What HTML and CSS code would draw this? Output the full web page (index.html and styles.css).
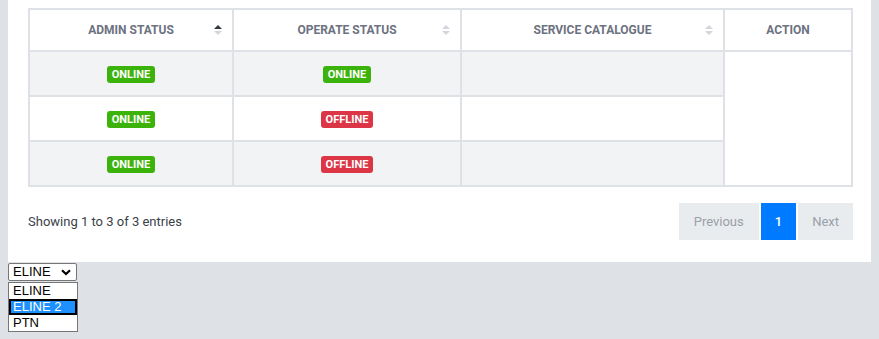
FILE: index.html
```html
<!DOCTYPE html>
<html lang="en">
<head>
  <meta charset="UTF-8">
  <meta name="viewport" content="width=device-width, initial-scale=1.0">
  <title>Services</title>
  <link rel="stylesheet" href="styles.css">
</head>
<body>
  <div class="card">
    <table class="grid">
      <colgroup>
        <col class="col-admin">
        <col class="col-operate">
        <col class="col-catalogue">
        <col class="col-action">
      </colgroup>
      <thead>
        <tr>
          <th class="sortable asc">Admin Status<span class="sort"></span></th>
          <th class="sortable">Operate Status<span class="sort"></span></th>
          <th class="sortable">Service Catalogue<span class="sort"></span></th>
          <th class="action">Action</th>
        </tr>
      </thead>
      <tbody>
        <tr class="odd">
          <td><span class="badge online">ONLINE</span></td>
          <td><span class="badge online">ONLINE</span></td>
          <td></td>
          <td class="action-cell" rowspan="3"></td>
        </tr>
        <tr>
          <td><span class="badge online">ONLINE</span></td>
          <td><span class="badge offline">OFFLINE</span></td>
          <td></td>
        </tr>
        <tr class="odd">
          <td><span class="badge online">ONLINE</span></td>
          <td><span class="badge offline">OFFLINE</span></td>
          <td></td>
        </tr>
      </tbody>
    </table>
    <div class="footer">
      <div class="info">Showing 1 to 3 of 3 entries</div>
      <div class="pager">
        <span class="page-btn disabled">Previous</span>
        <span class="page-btn current">1</span>
        <span class="page-btn disabled">Next</span>
      </div>
    </div>
  </div>
  <div class="pickers">
    <div class="picker">
      <span class="picker-value">ELINE</span>
      <svg class="picker-arrow" width="10" height="7" viewBox="0 0 10 7">
        <path d="M1 1.2 L5 5 L9 1.2" fill="none" stroke="#000" stroke-width="2.2"/>
      </svg>
    </div>
    <div class="picker-list" role="listbox">
      <div class="picker-item" role="option">ELINE</div>
      <div class="picker-item active" role="option">ELINE 2</div>
      <div class="picker-item" role="option">PTN</div>
    </div>
  </div>
</body>
</html>
```

FILE: styles.css
```css
body {
  margin: 0 8px;
  background-color: #dee1e5;
  font-family: Roboto, 'Liberation Sans', sans-serif;
  color: #3a3f4a;
}
.card {
  width: 825px;
  background-color: #fff;
  padding: 8px 19px 22px 20px;
}
.grid {
  width: calc(100% - 2px);
  table-layout: fixed;
  border-collapse: collapse;
  border: 2px solid #dee2e6;
}
.col-admin { width: 204px; }
.col-operate { width: 228px; }
.col-catalogue { width: 263px; }
.col-action { width: 128px; }
.grid th,
.grid td {
  border: 2px solid #dee2e6;
  text-align: center;
  vertical-align: middle;
}
.grid th {
  position: relative;
  padding: 12px 10px;
  line-height: 16px;
  font-size: 12px;
  font-weight: 700;
  text-transform: uppercase;
  color: #6c7280;
}
.grid td {
  padding: 12px 10px;
  height: 19px;
  line-height: 17px;
}
.grid tr.odd td {
  background-color: #f2f3f5;
}
.grid td.action-cell {
  background-color: #fff !important;
}
.sort {
  position: absolute;
  right: 10px;
  top: 50%;
  margin-top: -6px;
  width: 8px;
  height: 12px;
}
.sort::before,
.sort::after {
  content: "";
  position: absolute;
  left: 0;
  border-left: 4px solid transparent;
  border-right: 4px solid transparent;
}
.sort::before {
  top: 1px;
  border-bottom: 4px solid #d3d6db;
}
.sort::after {
  bottom: 1px;
  border-top: 4px solid #d3d6db;
}
th.asc .sort::before {
  border-bottom-color: #343a40;
}
.badge {
  display: inline-block;
  padding: 2px 5px;
  border-radius: 3px;
  font-size: 11px;
  font-weight: 700;
  line-height: 13px;
  color: #fff;
}
.badge.online {
  background-color: #3cb30a;
}
.badge.offline {
  background-color: #dc3545;
}
.footer {
  display: flex;
  justify-content: space-between;
  align-items: center;
  margin-top: 16px;
}
.info {
  font-size: 13px;
}
.pager {
  display: flex;
  gap: 2px;
}
.page-btn {
  padding: 10px 15px;
  font-size: 13px;
  line-height: 17px;
}
.page-btn.disabled {
  background-color: #e9ecef;
  color: #9aa0a9;
}
.page-btn.current {
  padding: 10px 14px;
  background-color: #007bff;
  color: #fff;
  font-weight: 500;
}
.page-btn:last-child {
  padding: 10px 14px;
}
.pickers {
  display: flex;
  flex-direction: column;
  align-items: flex-start;
  gap: 1px;
  padding-top: 1px;
  font-family: 'Liberation Sans', Arial, sans-serif;
  font-size: 13px;
  color: #000;
}
.picker {
  position: relative;
  box-sizing: border-box;
  width: 69px;
  height: 18px;
  padding-left: 4px;
  border: 1px solid #767676;
  border-radius: 2px;
  background-color: #fff;
  line-height: 16px;
}
.picker-arrow {
  position: absolute;
  right: 5px;
  top: 5px;
}
.picker-list {
  width: 68px;
  border: 1px solid #767676;
  background-color: #fff;
}
.picker-item {
  height: 16px;
  line-height: 16px;
  padding-left: 4px;
}
.picker-item.active {
  background-color: #1e90ff;
  color: #fff;
  outline: 2px solid #000;
  outline-offset: -2px;
}
```
